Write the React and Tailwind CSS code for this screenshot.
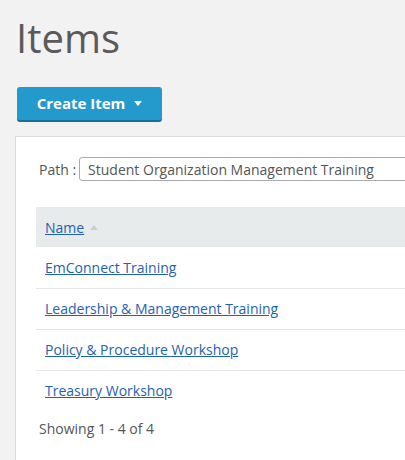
const items = [
  "EmConnect Training",
  "Leadership & Management Training",
  "Policy & Procedure Workshop",
  "Treasury Workshop",
];

const App = () => {
  return (
    <div
      className="h-[460px] w-[405px] overflow-hidden bg-[#f2f2f2]"
      style={{ fontFamily: '"Open Sans", sans-serif' }}
    >
      <h1 className="pl-[16px] pt-[14px] text-[40px] leading-[48px] font-normal text-[#5a5a5a]">
        Items
      </h1>

      <div className="pl-[17px] pt-[25px]">
        <button className="flex h-[35px] w-[145px] items-center justify-center gap-[9px] rounded-[3px] border-b-2 border-[#17709a] bg-[#2399cc] text-[15px] font-bold text-white">
          Create Item
          <svg width="8" height="5" viewBox="0 0 8 5">
            <path d="M0 0h8L4 5z" fill="white" />
          </svg>
        </button>
      </div>

      <div className="ml-[15px] mt-[14px] h-[400px] w-[520px] border border-[#dddddd] bg-white px-[20px] pt-[20px]">
        <div className="flex items-center gap-[3px] text-[14px] text-[#555555]">
          <span className="pl-[3px]">Path :</span>
          <div className="flex h-[24px] flex-1 items-center rounded-[3px] border border-[#aaaaaa] px-[8px]">
            Student Organization Management Training
          </div>
        </div>

        <table className="mt-[26px] w-full border-collapse text-[14px]">
          <thead>
            <tr className="h-[40px] bg-[#e8ebec]">
              <th className="px-[9px] text-left font-normal">
                <span className="flex items-center gap-[6px]">
                  <a href="#" className="text-[#1f62b0] underline">
                    Name
                  </a>
                  <svg width="8" height="5" viewBox="0 0 8 5">
                    <path d="M4 0l4 5H0z" fill="#c9d0d4" />
                  </svg>
                </span>
              </th>
            </tr>
          </thead>
          <tbody>
            {items.map((item, i) => (
              <tr
                key={item}
                className={`h-[41px] ${i < items.length - 1 ? "border-b border-[#e6e6e6]" : ""}`}
              >
                <td className="px-[9px]">
                  <a href="#" className="text-[#1f62b0] underline">
                    {item}
                  </a>
                </td>
              </tr>
            ))}
          </tbody>
        </table>

        <p className="pl-[3px] pt-[7px] text-[14px] text-[#555555]">
          Showing 1 - 4 of 4
        </p>
      </div>
    </div>
  );
};

export default App;
